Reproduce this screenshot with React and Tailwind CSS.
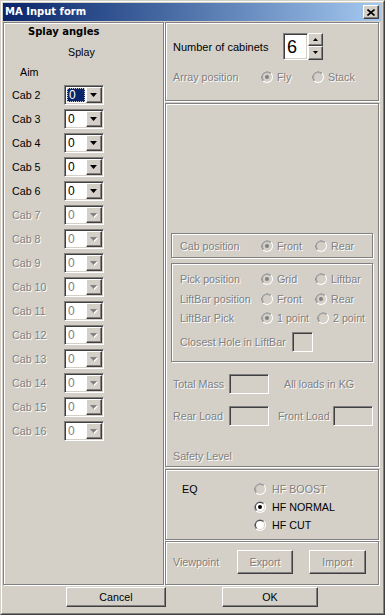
import React from "react";

const dis = "text-[#808080] [text-shadow:1px_1px_0_#fff]";
const raised =
  "border border-t-white border-l-white border-b-[#404040] border-r-[#404040] shadow-[inset_-1px_-1px_0_#808080] bg-[#d4d0c8]";
const sunken =
  "border border-t-[#808080] border-l-[#808080] border-b-white border-r-white p-px shadow-[inset_1px_1px_0_#404040,inset_-1px_-1px_0_#d4d0c8]";
const etched = "border border-[#808080] shadow-[inset_1px_1px_0_#fff,1px_1px_0_#fff]";

function Radio({ checked, disabled }) {
  const fill = disabled ? "#d4d0c8" : "#fff";
  const dot = disabled ? "#808080" : "#000";
  return (
    <svg width="12" height="12" viewBox="0 0 12 12" className="shrink-0">
      <circle cx="6" cy="6" r="6" fill="#fff" />
      <path d="M10.24 1.76A6 6 0 0 0 1.76 10.24Z" fill="#808080" />
      <circle cx="6" cy="6" r="5" fill="#d4d0c8" />
      <path d="M9.54 2.46A5 5 0 0 0 2.46 9.54Z" fill={disabled ? "#a0a0a0" : "#404040"} />
      <circle cx="6" cy="6" r="4" fill={fill} />
      {checked && <circle cx="6" cy="6" r="2" fill={dot} />}
    </svg>
  );
}

function Opt({ label, checked, disabled, w, gap = "ml-[4px]" }) {
  return (
    <div className={`flex items-center ${w || ""}`}>
      <Radio checked={checked} disabled={disabled} />
      <span className={`${gap} whitespace-nowrap ${disabled ? dis : ""}`}>{label}</span>
    </div>
  );
}

function Tri({ disabled, up, w = 7, h = 4 }) {
  const d = up ? `M0 ${h}H${w}L${w / 2} 0Z` : `M0 0H${w}L${w / 2} ${h}Z`;
  return (
    <svg width={w + 1} height={h + 1} viewBox={`0 0 ${w + 1} ${h + 1}`}>
      {disabled && <path d={d} fill="#fff" transform="translate(1 1)" />}
      <path d={d} fill={disabled ? "#808080" : "#000"} />
    </svg>
  );
}

function Combo({ disabled, selected }) {
  return (
    <div className={`${sunken} w-[40px] h-[20px] flex`}>
      <div className="flex-1 bg-white flex items-center text-[12px]">
        {selected ? (
          <div className="ml-px h-[14px] w-[18px] bg-[#0a246a] text-white border border-dotted border-[#c8c8c8] flex items-center pl-px leading-[12px]">
            0
          </div>
        ) : (
          <span className={`pl-[2px] leading-[12px] ${disabled ? "text-[#808080]" : ""}`}>0</span>
        )}
      </div>
      <div className={`${raised} w-[16px] h-[16px] flex items-center justify-center`}>
        <Tri disabled={disabled} />
      </div>
    </div>
  );
}

function Box({ w = "w-[40px]" }) {
  return <div className={`${sunken} ${w} h-[20px] bg-[#d4d0c8]`} />;
}

export default function App() {
  const cabs = [];
  for (let i = 2; i <= 16; i++) cabs.push(i);
  return (
    <div className="w-[385px] h-[615px] bg-[#d4d0c8] border border-t-[#d4d0c8] border-l-[#d4d0c8] border-b-[#404040] border-r-[#404040] font-['Liberation_Sans',Arial,sans-serif] text-[10.7px] leading-[12px] text-black overflow-hidden">
      <div className="h-full border border-t-white border-l-white border-b-[#808080] border-r-[#808080] p-px flex flex-col">
        {/* Title bar */}
        <div className="h-[18px] shrink-0 flex items-center justify-between pl-[2px] pr-[3px] bg-linear-to-r from-[#0a246a] to-[#a6caf0]">
          <span className="font-['DejaVu_Sans',sans-serif] font-bold text-[10px] text-white leading-[12px]">
            MA Input form
          </span>
          <div className={`${raised} w-[16px] h-[14px] flex items-center justify-center`}>
            <svg width="8" height="7" viewBox="0 0 8 7">
              <path d="M0.5 0.5L7.5 6.5M7.5 0.5L0.5 6.5" stroke="#000" strokeWidth="1.6" />
            </svg>
          </div>
        </div>

        {/* Body */}
        <div className="flex-1 flex flex-col pt-px">
          <div className="h-[563px] flex">
            {/* Left panel */}
            <div className={`${etched} w-[161px] h-full flex flex-col`}>
              <div className="mt-[3px] pl-[24px] font-['DejaVu_Sans',sans-serif] font-bold text-[10px] leading-[12px]">
                Splay angles
              </div>
              <div className="mt-[8px] pl-[64px]">Splay</div>
              <div className="mt-[8px] pl-[16px]">Aim</div>
              <div className="mt-[5px] flex flex-col">
                {cabs.map((n) => {
                  const d = n > 6;
                  return (
                    <div key={n} className="h-[24px] flex items-center pl-[8px]">
                      <span className={`w-[52px] ${d ? dis : ""}`}>Cab {n}</span>
                      <Combo disabled={d} selected={n === 2} />
                    </div>
                  );
                })}
              </div>
            </div>

            {/* Right column */}
            <div className="w-[214px] ml-px flex flex-col">
              {/* Top panel */}
              <div className={`${etched} h-[79px] flex flex-col`}>
                <div className="mt-[10px] pl-[7px] flex items-center h-[27px]">
                  <span className="w-[110px] text-[11px]">Number of cabinets</span>
                  <div className={`${sunken} w-[25px] h-[27px] bg-white flex items-center`}>
                    <span className="pl-[2px] text-[18px] leading-[20px]">6</span>
                  </div>
                  <div className="w-[15px] h-[27px] flex flex-col">
                    <div className={`${raised} h-[13px] flex items-center justify-center`}>
                      <Tri up w={5} h={3} />
                    </div>
                    <div className={`${raised} h-[14px] flex items-center justify-center`}>
                      <Tri w={5} h={3} />
                    </div>
                  </div>
                </div>
                <div className="mt-[9px] h-[16px] pl-[7px] flex items-center">
                  <span className={`w-[88px] ${dis}`}>Array position</span>
                  <Opt label="Fly" checked disabled w="w-[51px]" />
                  <Opt label="Stack" disabled />
                </div>
              </div>

              {/* Middle panel */}
              <div className={`${etched} mt-[2px] h-[364px] flex flex-col`}>
                <div className={`${etched} mt-[129px] ml-[5px] w-[202px] h-[25px] flex items-center pl-[8px]`}>
                  <span className={`w-[81px] ${dis}`}>Cab position</span>
                  <Opt label="Front" checked disabled w="w-[54px]" />
                  <Opt label="Rear" disabled />
                </div>
                <div className={`${etched} mt-[5px] ml-[5px] w-[202px] h-[99px] flex flex-col pt-[7px] pl-[8px]`}>
                  <div className="h-[16px] flex items-center">
                    <span className={`w-[81px] ${dis}`}>Pick position</span>
                    <Opt label="Grid" checked disabled w="w-[54px]" />
                    <Opt label="Liftbar" disabled />
                  </div>
                  <div className="mt-[4px] h-[16px] flex items-center">
                    <span className={`w-[81px] ${dis}`}>LiftBar position</span>
                    <Opt label="Front" disabled w="w-[54px]" />
                    <Opt label="Rear" checked disabled />
                  </div>
                  <div className="mt-[3px] h-[16px] flex items-center">
                    <span className={`w-[81px] ${dis}`}>LiftBar Pick</span>
                    <Opt label="1 point" checked disabled w="w-[56px]" />
                    <Opt label="2 point" disabled />
                  </div>
                  <div className="mt-[6px] h-[20px] flex items-center">
                    <span className={`w-[112px] ${dis}`}>Closest Hole in LiftBar</span>
                    <Box w="w-[21px]" />
                  </div>
                </div>
                <div className="mt-[12px] pl-[7px] h-[20px] flex items-center">
                  <span className={`w-[56px] ${dis}`}>Total Mass</span>
                  <Box />
                  <span className={`ml-[15px] ${dis}`}>All loads in KG</span>
                </div>
                <div className="mt-[12px] pl-[7px] h-[20px] flex items-center">
                  <span className={`w-[56px] ${dis}`}>Rear Load</span>
                  <Box />
                  <span className={`ml-[9px] w-[55px] ${dis}`}>Front Load</span>
                  <Box />
                </div>
                <div className={`mt-[24px] pl-[7px] ${dis}`}>Safety Level</div>
              </div>

              {/* EQ panel */}
              <div className={`${etched} mt-[2px] h-[71px] flex pt-[10px]`}>
                <div className="w-[88px] pl-[16px] h-[18px] flex items-center">EQ</div>
                <div className="flex flex-col">
                  <div className="h-[18px] flex items-center">
                    <Opt label="HF BOOST" disabled gap="ml-[6px]" />
                  </div>
                  <div className="h-[18px] flex items-center">
                    <Opt label="HF NORMAL" checked gap="ml-[6px]" />
                  </div>
                  <div className="h-[18px] flex items-center">
                    <Opt label="HF CUT" gap="ml-[6px]" />
                  </div>
                </div>
              </div>

              {/* Viewpoint panel */}
              <div className={`${etched} mt-px h-[44px] flex pt-[8px] pl-[7px]`}>
                <div className={`w-[64px] h-[24px] flex items-center ${dis}`}>Viewpoint</div>
                <div className={`${raised} w-[56px] h-[24px] flex items-center justify-center ${dis}`}>Export</div>
                <div className={`${raised} ml-[16px] w-[57px] h-[24px] flex items-center justify-center ${dis}`}>Import</div>
              </div>
            </div>
          </div>

          {/* Bottom buttons */}
          <div className="pt-[2px] flex">
            <div className={`${raised} ml-[63px] w-[100px] h-[20px] flex items-center justify-center`}>Cancel</div>
            <div className={`${raised} ml-[56px] w-[96px] h-[20px] flex items-center justify-center`}>OK</div>
          </div>
        </div>
      </div>
    </div>
  );
}
